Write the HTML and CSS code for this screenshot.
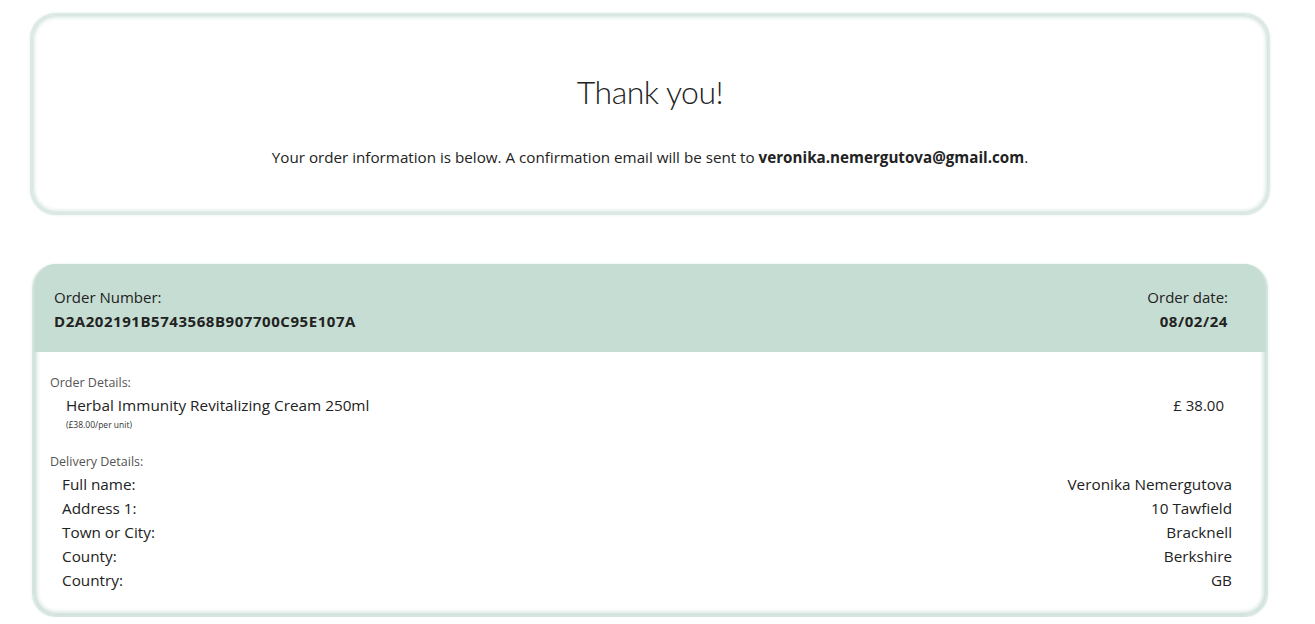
FILE: index.html
```html
<!DOCTYPE html>
<html>
<head>
<meta charset="utf-8">
<link rel="stylesheet" href="styles.css">
</head>
<body>
<div class="page">
  <section class="thanks">
    <h1 class="title">Thank you!</h1>
    <p class="lead">Your order information is below. A confirmation email will be sent to <strong>veronika.nemergutova@gmail.com</strong>.</p>
  </section>

  <section class="order">
    <div class="order-head">
      <div class="head-col">
        <div class="label">Order Number:</div>
        <div class="strong">D2A202191B5743568B907700C95E107A</div>
      </div>
      <div class="head-col right">
        <div class="label">Order date:</div>
        <div class="strong">08/02/24</div>
      </div>
    </div>
    <div class="order-body">
      <div class="section-label">Order Details:</div>
      <div class="item">
        <div class="item-info">
          <div class="item-name">Herbal Immunity Revitalizing Cream 250ml</div>
          <div class="item-unit">(£38.00/per unit)</div>
        </div>
        <div class="item-price">£ 38.00</div>
      </div>
      <div class="section-label delivery">Delivery Details:</div>
      <div class="rows">
        <div class="row"><span>Full name:</span><span>Veronika Nemergutova</span></div>
        <div class="row"><span>Address 1:</span><span>10 Tawfield</span></div>
        <div class="row"><span>Town or City:</span><span>Bracknell</span></div>
        <div class="row"><span>County:</span><span>Berkshire</span></div>
        <div class="row"><span>Country:</span><span>GB</span></div>
      </div>
    </div>
  </section>
</div>
</body>
</html>
```

FILE: styles.css
```css
* { box-sizing: border-box; }
html, body { margin: 0; padding: 0; background: #fff; }
body {
  font-family: "Open Sans", "Noto Sans", "Liberation Sans", sans-serif;
  color: #222;
  font-size: 15px;
}
.page {
  padding: 13px 45px 0 30px;
}
.thanks {
  width: 1240px;
  height: 202px;
  border: 2px solid #dbe8e3;
  border-radius: 26px;
  box-shadow: inset 0 0 5px 1px #bcd5ca, 0 0 3px #e3eeea;
  text-align: center;
  padding-top: 56px;
}
.title {
  margin: 0;
  font-family: "Lato", "Open Sans", sans-serif;
  font-weight: 300;
  font-size: 32px;
  line-height: 42px;
  color: #222;
  letter-spacing: -0.5px;
}
.lead {
  margin: 33px 0 0;
  font-size: 15.2px;
  line-height: 22px;
  color: #222;
}
.lead strong { font-weight: 700; }

.order {
  margin: 49px 0 0 2px;
  width: 1236px;
  height: 353px;
  border-radius: 24px;
  overflow: hidden;
  box-shadow: inset 0 0 5px 2px #bcd5ca, 0 0 3px #e3eeea;
  border: 2px solid #d6e6df;
  border-top: none;
}
.order-head {
  background: #c6ddd3;
  height: 88px;
  display: flex;
  justify-content: space-between;
  padding: 22px 38px 0 20px;
}
.head-col .label {
  font-size: 15px;
  line-height: 22px;
  color: #222;
}
.head-col .strong {
  font-weight: 700;
  font-size: 15px;
  line-height: 22px;
  margin-top: 2px;
  letter-spacing: 0.55px;
}
.head-col.right { text-align: right; }

.order-body {
  padding: 22px 34px 0 16px;
}
.section-label {
  font-size: 12.5px;
  line-height: 18px;
  color: #555;
}
.section-label.delivery { margin-top: 20px; }
.item {
  display: flex;
  justify-content: space-between;
  padding: 2px 8px 0 16px;
}
.item-name {
  font-size: 15.3px;
  line-height: 22px;
}
.item-unit {
  font-size: 8.5px;
  line-height: 16px;
  color: #333;
  margin-top: 1px;
}
.item-price {
  font-size: 15px;
  line-height: 22px;
}
.rows {
  padding: 1px 0 0 12px;
}
.row {
  display: flex;
  justify-content: space-between;
  font-size: 15.3px;
  line-height: 24px;
}
```
